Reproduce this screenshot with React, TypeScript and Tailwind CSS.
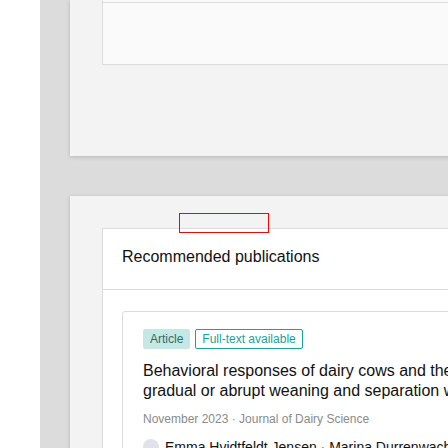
const TopCard = () => {
  return (
    <div className="w-[720px] bg-[#f3f3f3] pl-8 pb-[91px] shadow-[0_1px_4px_rgba(0,0,0,0.18)]">
      <div className="bg-[#fafafa] border-x border-b border-[#dcdcdc]">
        <div className="h-[2px]" />
        <div className="h-[62px] border-t border-[#dcdcdc]" />
      </div>
    </div>
  );
};

const Badge = ({ label, outline = false }: { label: string; outline?: boolean }) => {
  if (outline) {
    return (
      <span className="h-5 px-[6px] flex items-center rounded-[2px] border border-[#17a39b] text-[#17a39b] text-xs leading-4">
        {label}
      </span>
    );
  }
  return (
    <span className="h-5 px-[7px] flex items-center rounded-[2px] bg-[#c6e8e5] text-[#2f6b69] text-xs leading-4">
      {label}
    </span>
  );
};

const Publication = () => {
  return (
    <div className="border border-[#dcdcdc] rounded-[3px] pt-[17px] px-5 pb-5">
      <div className="flex gap-[5px]">
        <Badge label="Article" />
        <Badge label="Full-text available" outline />
      </div>
      <div className="mt-3 text-base leading-5 text-[#111111] w-[400px] line-clamp-2">
        Behavioral responses of dairy cows and their calves to gradual or abrupt weaning and separation when managed in full-time dam-calf contact systems
      </div>
      <div className="mt-[10px] text-xs leading-4 text-[#8a8a8a]">
        November 2023 · Journal of Dairy Science
      </div>
      <div className="mt-3 flex items-center gap-[6px] whitespace-nowrap">
        <span className="w-4 h-4 rounded-full bg-[#e1e1ea] shrink-0" />
        <span className="text-sm leading-4 text-[#111111]">
          Emma Hvidtfeldt Jensen · Marina Durrenwachter · Margit Bak Jensen
        </span>
      </div>
    </div>
  );
};

const RecommendedCard = () => {
  return (
    <div className="relative w-[720px] bg-[#f3f3f3] pt-8 pl-8 shadow-[0_1px_4px_rgba(0,0,0,0.18)]">
      <div className="bg-white border border-[#dcdcdc]">
        <div className="pl-[19px] pt-4 pb-5 border-b border-[#dcdcdc] text-base leading-6 text-[#111111]">
          Recommended publications
        </div>
        <div className="pl-[19px] pt-[21px]">
          <Publication />
        </div>
      </div>
      {/* placeholder outline */}
      <div className="absolute left-[109px] top-[17px] w-[90px] h-[20px] border border-[#ff0000]" />
    </div>
  );
};

export default function App() {
  return (
    <div className="w-[448px] h-[448px] overflow-hidden bg-white flex font-['Liberation_Sans',Arial,sans-serif]">
      <div className="w-10 shrink-0" />
      <div className="flex-1 min-w-0 bg-[#dcdcdc] pl-[30px] flex flex-col gap-10">
        <TopCard />
        <RecommendedCard />
      </div>
    </div>
  );
}
